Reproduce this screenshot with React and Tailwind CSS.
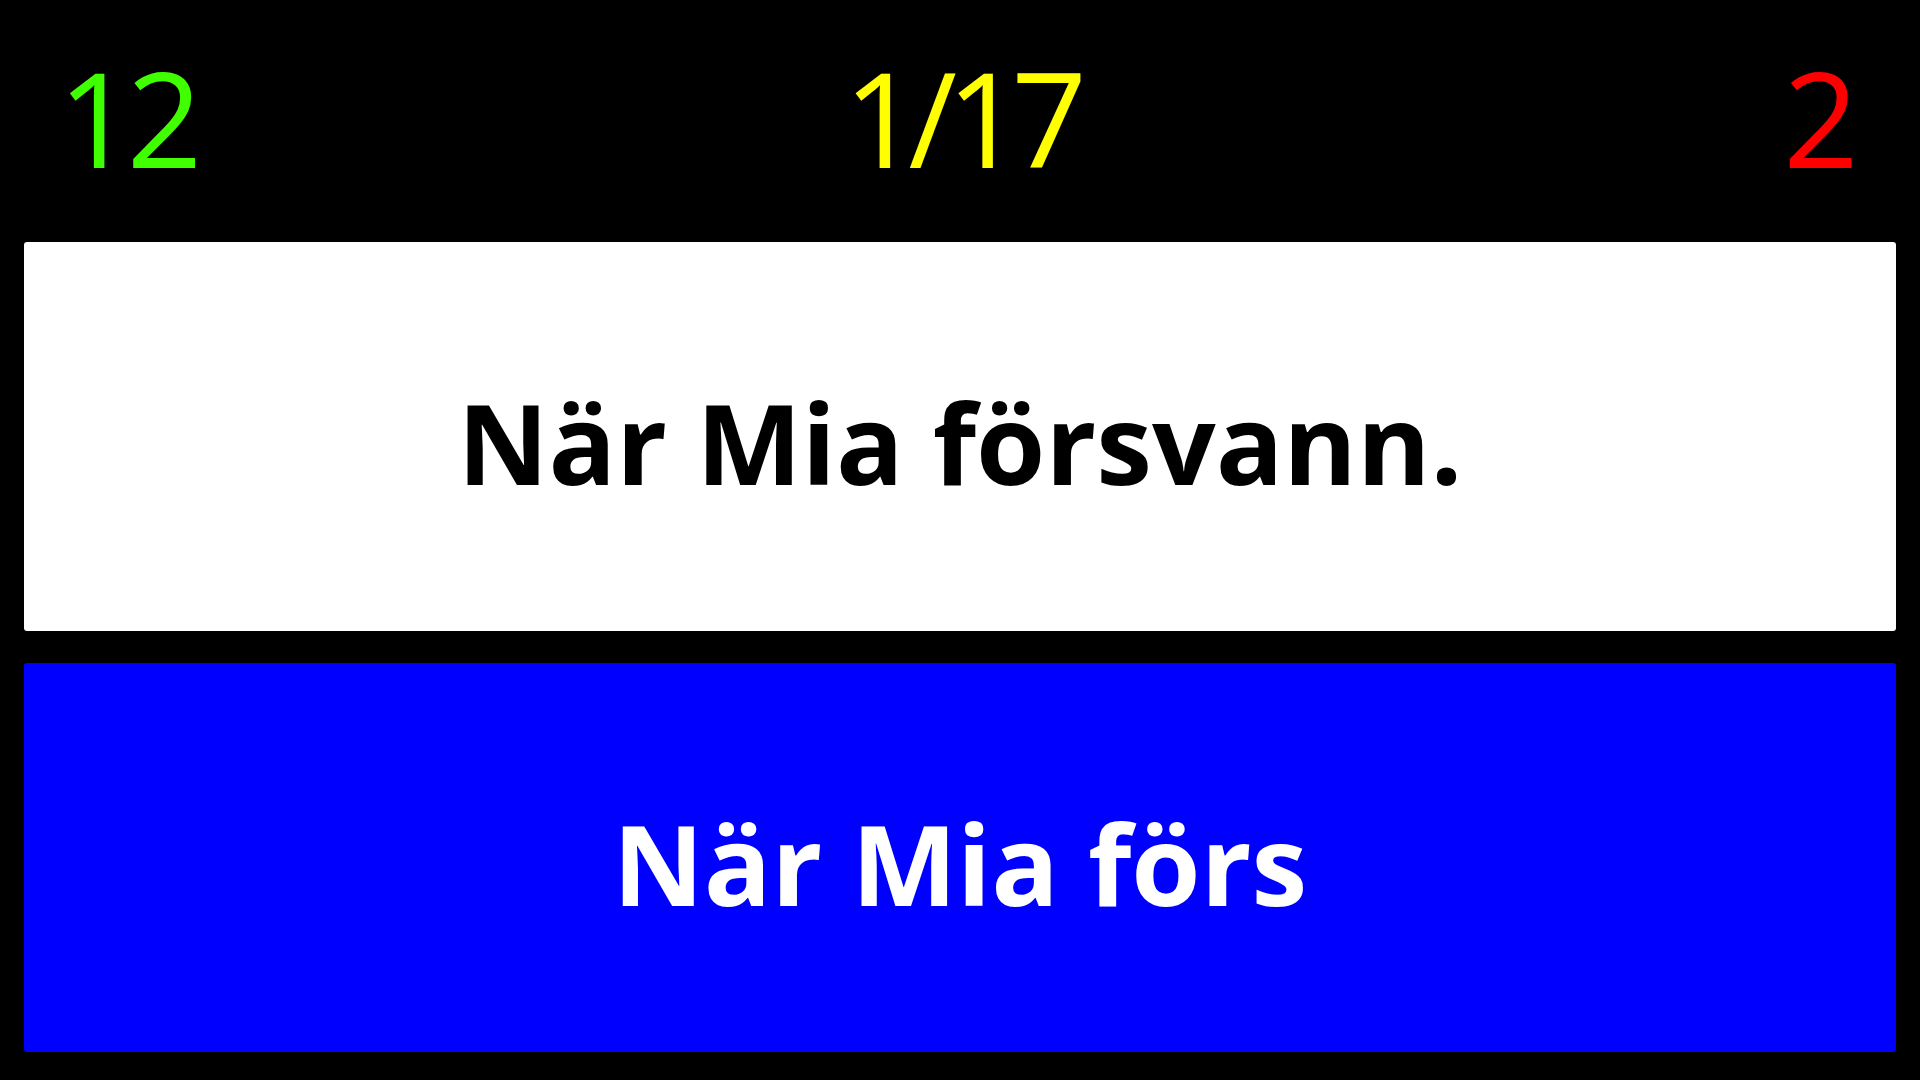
import React from 'react';

function App() {
    const font = { fontFamily: '"Open Sans", "Noto Sans", sans-serif' };

    return (
        <div className="h-screen w-full bg-black flex flex-col overflow-hidden" style={font}>
            <div className="h-[242px] shrink-0 grid grid-cols-3 items-center pb-[8px] text-[132px] leading-none tracking-[-0.05em]">
                <div className="pl-[58px] text-[#40ff00]">12</div>
                <div className="text-center text-[#ffff00] tracking-[-0.08em]">1/17</div>
                <div className="pr-[68px] text-right text-[#ff0000]">2</div>
            </div>
            <div className="flex-1 flex flex-col gap-8 px-6 pb-7">
                <div className="flex-1 rounded-[3px] bg-white flex items-center justify-center pt-[10px]">
                    <span className="text-[112px] font-bold leading-none text-black">När Mia försvann.</span>
                </div>
                <div className="flex-1 rounded-[3px] bg-[#0000ff] flex items-center justify-center pt-[10px]">
                    <span className="text-[112px] font-bold leading-none text-white">När Mia förs</span>
                </div>
            </div>
        </div>
    );
}

export default App;
